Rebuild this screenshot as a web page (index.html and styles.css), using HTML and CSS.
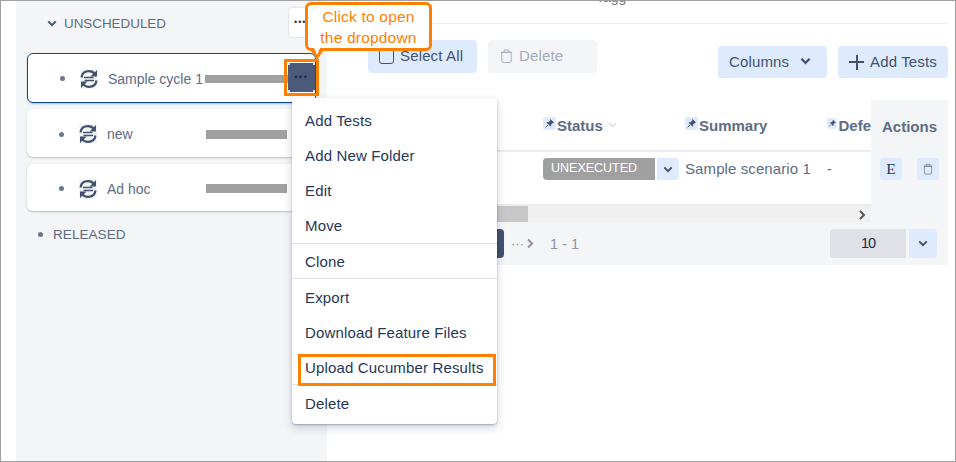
FILE: index.html
```html
<!DOCTYPE html>
<html lang="en">
<head>
  <meta charset="UTF-8" />
  <title>Test Cycles</title>
  <link rel="stylesheet" href="styles.css">
</head>
<body>
  <svg width="0" height="0" class="sprite">
    <symbol id="cycle" viewBox="0 0 18 20">
      <rect width="18" height="20" rx="2" fill="#f4f5f7"/>
      <path d="M1.500 8.500C2 4.500 5 2.200 9 2.200c2.700 0 4.700 1.100 6 3M16.500 11.500C16 15.500 13 17.800 9 17.800c-2.700 0-4.700-1.100-6-3" fill="none" stroke="#42526e" stroke-width="2.200"/>
      <path d="M17 1v6.500h-6.500zM1 19v-6.500h6.500z" fill="#42526e"/>
      <path d="M4 8.500h9.500M14 11.500H4.500" fill="none" stroke="#42526e" stroke-width="1.700"/>
    </symbol>
    <symbol id="pin" viewBox="0 0 13 13">
      <rect width="13" height="13" rx="2" fill="#deebff"/>
      <path d="M7.500 2.500l3 3-1.200.4-1.500 1.500-.2 1.800-3.600-3.600 1.800-.2 1.500-1.500zM5 8l-2.500 2.500" fill="#42526e" stroke="#42526e" stroke-width=".8"/>
    </symbol>
    <symbol id="chev" viewBox="0 0 12 8">
      <path d="M1.500 1.500L6 6l4.500-4.500" fill="none" stroke="currentColor" stroke-width="2.400"/>
    </symbol>
    <symbol id="bin" viewBox="0 0 14 16">
      <path d="M2 4h10v9.500a1.500 1.500 0 0 1-1.500 1.500h-7A1.500 1.500 0 0 1 2 13.500zM1 4h12M4.500 4V1.500h5V4" fill="none" stroke="currentColor" stroke-width="1"/>
    </symbol>
  </svg>

  <div class="shell">
    <aside class="sidebar">
      <div class="group-head">
        <svg class="chev-sm"><use href="#chev"/></svg>
        <span>UNSCHEDULED</span>
        <span class="group-more">•••</span>
      </div>

      <div class="cycle-card active">
        <span class="dot"></span>
        <svg class="cycle-icon"><use href="#cycle"/></svg>
        <span class="cycle-name">Sample cycle 1</span>
        <span class="redacted"></span>
        <span class="more-btn">•••</span>
      </div>
      <div class="cycle-card">
        <span class="dot"></span>
        <svg class="cycle-icon"><use href="#cycle"/></svg>
        <span class="cycle-name">new</span>
        <span class="redacted"></span>
      </div>
      <div class="cycle-card last">
        <span class="dot"></span>
        <svg class="cycle-icon"><use href="#cycle"/></svg>
        <span class="cycle-name">Ad hoc</span>
        <span class="redacted"></span>
      </div>

      <div class="released">
        <span class="dot"></span>
        <span>RELEASED</span>
      </div>
    </aside>

    <main class="main">
      <div class="top-strip"><span>Tagg</span></div>

      <div class="toolbar">
        <div class="toolbar-left">
          <button class="btn btn-blue btn-select"><span class="checkbox"></span>Select All</button>
          <button class="btn btn-muted"><svg class="bin-lg"><use href="#bin"/></svg>Delete</button>
        </div>
        <div class="toolbar-right">
          <button class="btn btn-blue btn-columns">Columns <svg class="chev-md"><use href="#chev"/></svg></button>
          <button class="btn btn-blue btn-add"><span class="plus"></span>Add Tests</button>
        </div>
      </div>

      <div class="table-wrap">
        <div class="table-scroll">
          <div class="t-head">
            <span class="th th-status"><svg class="pin"><use href="#pin"/></svg>Status <svg class="chev-th"><use href="#chev"/></svg></span>
            <span class="th th-summary"><svg class="pin"><use href="#pin"/></svg>Summary</span>
            <span class="th th-defect"><svg class="pin"><use href="#pin"/></svg>Defe</span>
          </div>
          <div class="t-row">
            <span class="status-badge">UNEXECUTED</span>
            <span class="status-btn"><svg class="chev-sm"><use href="#chev"/></svg></span>
            <span class="td-summary">Sample scenario 1</span>
            <span class="td-defect">-</span>
          </div>
          <div class="scrollbar">
            <span class="thumb"></span>
            <svg class="scroll-arrow" viewBox="0 0 8 10"><path d="M2 1l4 4-4 4" fill="none" stroke="#555" stroke-width="2"/></svg>
          </div>
        </div>
        <div class="actions-col">
          <div class="actions-title">Actions</div>
          <div class="actions-row">
            <span class="icon-btn serif">E</span>
            <span class="icon-btn"><svg class="bin-sm"><use href="#bin"/></svg></span>
          </div>
        </div>
      </div>

      <div class="pager">
        <span class="page-current"></span>
        <span class="page-dots">···</span>
        <svg class="page-next" viewBox="0 0 8 10"><path d="M2 1l4 4-4 4" fill="none" stroke="#8a93a3" stroke-width="2"/></svg>
        <span class="page-range">1 - 1</span>
        <span class="page-size">10</span>
        <span class="size-btn"><svg class="chev-sm"><use href="#chev"/></svg></span>
      </div>
    </main>

    <ul class="menu">
      <li>Add Tests</li>
      <li>Add New Folder</li>
      <li>Edit</li>
      <li class="sep">Move</li>
      <li class="sep item-clone">Clone</li>
      <li class="item-export">Export</li>
      <li>Download Feature Files</li>
      <li class="sep highlighted">Upload Cucumber Results</li>
      <li class="item-delete">Delete</li>
    </ul>

    <div class="callout">Click to open<br>the dropdown</div>
  </div>
</body>
</html>
```

FILE: styles.css
```css
* {
  margin: 0;
  padding: 0;
  box-sizing: border-box;
}

body {
  width: 956px;
  height: 462px;
  overflow: hidden;
  background: #fff;
  font-family: "Liberation Sans", Arial, sans-serif;
  font-size: 14px;
  color: #42526e;
}

.sprite {
  position: absolute;
}

.shell {
  position: relative;
  display: flex;
  width: 956px;
  height: 462px;
  padding-left: 15px;
  border: 1px solid #a0a0a0;
  overflow: hidden;
}

/* left panel */
.sidebar {
  width: 311px;
  flex: none;
  padding: 0 11px;
  background: #f4f5f7;
}

.group-head {
  display: flex;
  align-items: center;
  height: 44px;
  margin-bottom: 8px;
  padding-left: 20px;
  font-size: 13.4px;
  color: #5e6c84;
  position: relative;
}

.chev-sm {
  width: 10px;
  height: 7px;
  margin-right: 7px;
  color: #42526e;
}

.group-more {
  position: absolute;
  left: 261px;
  top: 6px;
  width: 30px;
  height: 31px;
  border: 1px solid #e4e6ea;
  border-radius: 4px;
  background: #fff;
  font-size: 9px;
  letter-spacing: 1px;
  line-height: 29px;
  padding-left: 5px;
  color: #253858;
}

.cycle-card {
  display: flex;
  align-items: center;
  height: 48px;
  margin-bottom: 7px;
  padding: 2px 0 0 32px;
  background: #fff;
  border-radius: 6px;
  box-shadow: 0 1px 2px rgba(9, 30, 66, 0.25);
  position: relative;
}

.cycle-card.active {
  height: 50px;
  margin-bottom: 6px;
  border: 1px solid #0747a6;
  padding-top: 1px;
}

.cycle-card.active .redacted {
  width: 83px;
  height: 8px;
  margin-left: -2px;
}

.cycle-card.last {
  height: 47px;
}

.dot {
  width: 5px;
  height: 5px;
  border-radius: 50%;
  background: #6b778c;
  flex: none;
}

.cycle-icon {
  width: 18px;
  height: 20px;
  margin-left: 15px;
  flex: none;
}

.cycle-name {
  margin-left: 10px;
  width: 99px;
  font-size: 14px;
  color: #5e6c84;
  white-space: nowrap;
}

.redacted {
  width: 81px;
  height: 9px;
  background: #a0a0a0;
  flex: none;
}

.more-btn {
  position: absolute;
  left: 260px;
  top: 9px;
  width: 27px;
  height: 29px;
  background:
    linear-gradient(#d8dce4, #d8dce4) 0 0 / 2px 2px no-repeat,
    linear-gradient(#d8dce4, #d8dce4) 100% 0 / 2px 2px no-repeat,
    linear-gradient(#d8dce4, #d8dce4) 0 100% / 2px 2px no-repeat,
    linear-gradient(#d8dce4, #d8dce4) 100% 100% / 2px 2px no-repeat,
    #4a5a78;
  outline: 3px solid #ff8000;
  outline-offset: 1px;
  color: #172b4d;
  font-size: 9px;
  letter-spacing: 1.6px;
  line-height: 29px;
  text-align: center;
}

.released {
  display: flex;
  align-items: center;
  gap: 10px;
  margin-top: 16px;
  padding-left: 11px;
  font-size: 13.6px;
  color: #5e6c84;
}

/* right panel */
.main {
  flex: 1;
  min-width: 0;
  padding: 0 7px 0 1px;
}

.top-strip {
  height: 23px;
  border-bottom: 1px solid #ebecf0;
  font-size: 14px;
  color: #6b778c;
  overflow: hidden;
  line-height: 1;
}

.top-strip span {
  display: block;
  margin: -11px 0 0 268px;
}

.toolbar {
  display: flex;
  justify-content: space-between;
  align-items: flex-start;
  padding: 16px 0 0 40px;
  height: 76px;
}

.toolbar-left,
.toolbar-right {
  display: flex;
  gap: 11px;
}

.toolbar-right {
  margin-top: 6px;
}

.btn {
  display: flex;
  align-items: center;
  width: 109px;
  height: 33px;
  border: 0;
  border-radius: 4px;
  font-family: inherit;
  font-size: 15px;
  letter-spacing: 0.15px;
  color: #42526e;
  padding-bottom: 2px;
}

.toolbar-right .btn {
  height: 32px;
}

.btn-blue {
  background: #deebff;
}

.btn-muted {
  background: #f4f5f7;
  color: #a5adba;
  padding-left: 12px;
}

.btn-select {
  padding-left: 11px;
}

.checkbox {
  width: 15px;
  height: 15px;
  margin: 2px 6px 0 0;
  border: 1.5px solid #42526e;
  border-radius: 3px;
}

.bin-lg {
  width: 13px;
  height: 16px;
  margin-right: 6px;
}

.btn-columns {
  justify-content: flex-start;
  padding-left: 11px;
}

.chev-md {
  width: 11px;
  height: 8px;
  margin-left: 11px;
}

.btn-add {
  width: 110px;
  padding-left: 11px;
}

.plus {
  position: relative;
  width: 15px;
  height: 15px;
  margin: 2px 6px 0 0;
  background:
    linear-gradient(#42526e, #42526e) center / 15px 2px no-repeat,
    linear-gradient(#42526e, #42526e) center / 2px 15px no-repeat;
}

.table-wrap {
  display: flex;
  height: 122px;
}

.table-scroll {
  flex: 1;
  min-width: 0;
}

.t-head {
  display: flex;
  align-items: center;
  height: 52px;
  padding-left: 215px;
  border-bottom: 2px solid #ebecf0;
  font-weight: 700;
  font-size: 15px;
  color: #5e6c84;
}

.th {
  display: flex;
  align-items: center;
  gap: 1px;
  white-space: nowrap;
}

.pin {
  width: 13px;
  height: 13px;
  margin-bottom: 3px;
}

.th-status {
  width: 142px;
}

.chev-th {
  width: 9px;
  height: 6px;
  margin-left: 4px;
  color: #dfe1e6;
}

.th-summary {
  width: 142px;
}

.th-defect {
  width: 44px;
  overflow: hidden;
}

.t-row {
  display: flex;
  align-items: flex-start;
  height: 54px;
  padding: 6px 0 0 215px;
  border-bottom: 2px solid #ebecf0;
}

.status-badge {
  width: 112px;
  height: 22px;
  padding-left: 8px;
  background: #a0a0a0;
  border-radius: 4px 0 0 4px;
  color: #fff;
  font-size: 12.5px;
  line-height: 21px;
}

.status-btn {
  display: flex;
  align-items: center;
  justify-content: center;
  width: 22px;
  height: 22px;
  margin-left: 2px;
  background: #deebff;
  border-radius: 0 4px 4px 0;
}

.status-btn .chev-sm {
  margin: 0;
}

.td-summary {
  width: 142px;
  margin-left: 6px;
  font-size: 15px;
  letter-spacing: 0.1px;
  line-height: 22px;
  color: #5e6c84;
  white-space: nowrap;
}

.td-defect {
  line-height: 22px;
  color: #5e6c84;
}

.scrollbar {
  position: relative;
  height: 16px;
  background: #f0f0f0;
}

.thumb {
  display: block;
  width: 200px;
  height: 16px;
  background: #c8c8c8;
}

.scroll-arrow {
  position: absolute;
  right: 5px;
  top: 4px;
  width: 8px;
  height: 10px;
}

.actions-col {
  width: 77px;
  flex: none;
  background: #f4f5f7;
}

.actions-title {
  height: 52px;
  padding: 18px 0 0 11px;
  font-size: 15px;
  font-weight: 700;
  color: #5e6c84;
}

.actions-row {
  display: flex;
  justify-content: space-between;
  padding: 6px 9px 0 9px;
}

.icon-btn {
  display: flex;
  align-items: center;
  justify-content: center;
  width: 22px;
  height: 22px;
  background: #deebff;
  border-radius: 3px;
  color: #6b778c;
}

.serif {
  font-family: "Liberation Serif", serif;
  font-size: 15.5px;
  color: #253858;
}

.bin-sm {
  width: 10px;
  height: 12px;
}

.pager {
  display: flex;
  align-items: center;
  height: 43px;
  padding-right: 11px;
  background: #f4f5f7;
  color: #8993a4;
}

.page-current {
  width: 32px;
  height: 29px;
  margin-left: 144px;
  background: #42526e;
  border-radius: 0 4px 4px 0;
}

.page-dots {
  margin-left: 7px;
  font-size: 13px;
}

.page-next {
  width: 8px;
  height: 11px;
  margin-left: 2px;
}

.page-range {
  margin-left: 16px;
  font-size: 14.5px;
}

.page-size {
  width: 76px;
  height: 29px;
  margin-left: auto;
  background: #dfe1e6;
  border-radius: 4px 0 0 4px;
  color: #172b4d;
  font-size: 14.5px;
  letter-spacing: -1px;
  line-height: 29px;
  text-align: center;
}

.size-btn {
  display: flex;
  align-items: center;
  justify-content: center;
  width: 28px;
  height: 29px;
  margin-left: 3px;
  background: #deebff;
  border-radius: 0 4px 4px 0;
}

.size-btn .chev-sm {
  margin: 0;
}

/* dropdown opened from the more button */
.menu {
  position: absolute;
  left: 291px;
  top: 97px;
  width: 205px;
  height: 326px;
  list-style: none;
  background: #fff;
  border-radius: 4px;
  box-shadow: 0 1px 2px rgba(9, 30, 66, 0.3), 0 4px 10px rgba(9, 30, 66, 0.18);
  padding-top: 6px;
}

.menu li {
  height: 35px;
  padding: 8px 0 0 13px;
  font-size: 15px;
  letter-spacing: 0.15px;
  color: #253858;
  white-space: nowrap;
}

.menu li.sep {
  border-bottom: 1px solid #dfe1e6;
}

.menu li.item-clone {
  padding-top: 9px;
}

.menu li.item-export {
  height: 37px;
  padding-top: 10px;
}

.menu li.item-delete {
  height: 39px;
  padding-top: 10px;
}

.menu li.highlighted {
  position: relative;
  height: 34px;
}

.menu li.highlighted::before {
  content: "";
  position: absolute;
  left: 6px;
  top: 3px;
  width: 192px;
  height: 26px;
  border: 3px solid #ff8000;
}

/* annotation */
.callout {
  position: absolute;
  left: 304px;
  top: 1px;
  width: 127px;
  height: 49px;
  background: #fff;
  border: 3px solid #ff8000;
  border-radius: 6px;
  color: #ff8000;
  font-size: 15.5px;
  letter-spacing: 0.2px;
  line-height: 21px;
  text-align: center;
  padding-top: 1px;
}

.callout::after {
  content: "";
  position: absolute;
  left: 3px;
  top: calc(100% + 3px);
  border-left: 6px solid transparent;
  border-right: 6px solid transparent;
  border-top: 9px solid #ff8000;
}

.callout::before {
  content: "";
  position: absolute;
  z-index: 1;
  left: 6px;
  top: 100%;
  border-left: 3px solid transparent;
  border-right: 3px solid transparent;
  border-top: 7px solid #fff;
}
```
